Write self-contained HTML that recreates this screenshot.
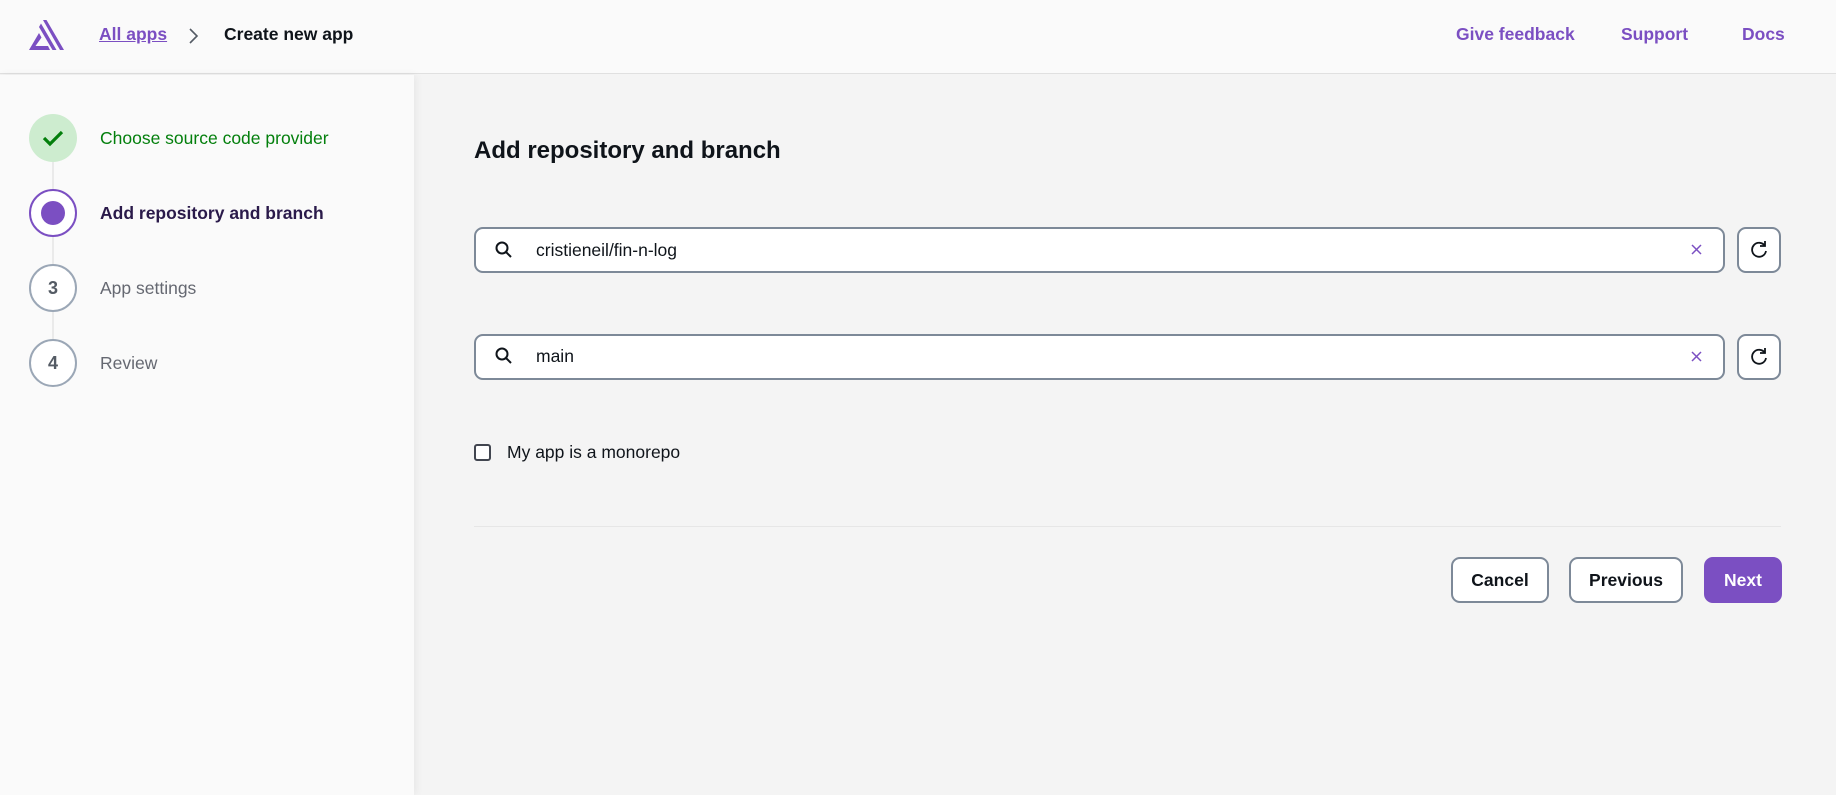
<!DOCTYPE html>
<html><head><meta charset="utf-8"><style>
*{box-sizing:border-box;margin:0;padding:0}
body{width:1836px;height:795px;overflow:hidden;font-family:"Liberation Sans",sans-serif;background:#f4f4f4;position:relative;color:#0f141a}
.hdr{position:absolute;left:0;top:0;width:1836px;height:74px;background:#fafafa;border-bottom:1px solid #e0e0e0}
.abs{position:absolute;white-space:nowrap}
.side{position:absolute;left:0;top:75px;width:414px;height:720px;background:#fafafa;box-shadow:2px 0 8px rgba(0,0,0,0.06)}
.circ{position:absolute;left:29px;width:48px;height:48px;border-radius:50%;display:flex;align-items:center;justify-content:center;font-weight:bold;font-size:18px;color:#545b64}
.lbl{position:absolute;left:100px;font-size:17.5px;line-height:20px}
.inp{position:absolute;left:474px;width:1251px;height:46px;border:2px solid #7d8998;border-radius:9px;background:#fff}
.rb{position:absolute;left:1737px;width:44px;height:46px;border:2px solid #7d8998;border-radius:9px;background:#fff;display:flex;align-items:center;justify-content:center}
.btn{position:absolute;top:557px;height:46px;border:2px solid #7d8998;border-radius:9px;background:#fff;font-weight:bold;font-size:17.5px;display:flex;align-items:center;justify-content:center}
.purple{color:#7b4fc2}
</style></head><body>
<div class="hdr">
<svg class="abs" style="left:29px;top:19px" width="36" height="33" viewBox="0 0 36 33"><path d="M0 31 L10 14 L12.5 18.5 L6.5 27 L19 27 L21 31Z" fill="#7b4fc2"/><path d="M14 1 L17.5 1 L35 31 L31 31Z" fill="#7b4fc2"/><path d="M10 8 L12 4.5 L27.5 31 L23.5 31Z" fill="#7b4fc2"/></svg>
<div class="abs purple" style="left:99px;top:24px;font-size:17.5px;font-weight:bold;text-decoration:underline">All apps</div>
<svg class="abs" style="left:188px;top:27px" width="12" height="18" viewBox="0 0 12 18"><path d="M2 2 L9 9 L2 16" stroke="#545b64" stroke-width="1.6" fill="none"/></svg>
<div class="abs" style="left:224px;top:24px;font-size:17.5px;font-weight:bold">Create new app</div>
<div class="abs purple" style="left:1456px;top:24px;font-size:17.5px;font-weight:bold">Give feedback</div>
<div class="abs purple" style="left:1621px;top:24px;font-size:17.5px;font-weight:bold">Support</div>
<div class="abs purple" style="left:1742px;top:24px;font-size:17.5px;font-weight:bold">Docs</div>
</div>
<div class="side">
<div class="abs" style="left:52px;top:50px;width:2px;height:240px;background:#eaeaea"></div>
<div class="circ" style="top:39px;background:#cdeccf"><svg width="22" height="18" viewBox="0 0 22 18"><path d="M2 9 L8 15 L20 3" stroke="#037f0c" stroke-width="3.2" fill="none"/></svg></div>
<div class="lbl" style="top:53px;color:#037f0c">Choose source code provider</div>
<div class="circ" style="top:114px;border:2px solid #7b4fc2;background:#fff"><div style="width:24px;height:24px;border-radius:50%;background:#7b4fc2"></div></div>
<div class="lbl" style="top:128px;font-weight:bold;color:#2a1a4a">Add repository and branch</div>
<div class="circ" style="top:189px;border:2px solid #9ba7b6;background:#fff">3</div>
<div class="lbl" style="top:203px;color:#656871">App settings</div>
<div class="circ" style="top:264px;border:2px solid #9ba7b6;background:#fff">4</div>
<div class="lbl" style="top:278px;color:#656871">Review</div>
</div>
<div class="abs" style="left:474px;top:137px;font-size:24px;font-weight:bold">Add repository and branch</div>
<div class="inp" style="top:227px"></div>
<div class="inp" style="top:334px"></div>
<svg class="abs" style="left:495px;top:241px" width="18" height="18" viewBox="0 0 18 18"><circle cx="7" cy="7" r="5.5" stroke="#0f141a" stroke-width="2" fill="none"/><path d="M11 11 L16 16" stroke="#0f141a" stroke-width="2"/></svg>
<svg class="abs" style="left:495px;top:347px" width="18" height="18" viewBox="0 0 18 18"><circle cx="7" cy="7" r="5.5" stroke="#0f141a" stroke-width="2" fill="none"/><path d="M11 11 L16 16" stroke="#0f141a" stroke-width="2"/></svg>
<div class="abs" style="left:536px;top:240px;font-size:17.5px">cristieneil/fin-n-log</div>
<div class="abs" style="left:536px;top:346px;font-size:17.5px">main</div>
<svg class="abs" style="left:1691px;top:244px" width="11" height="11" viewBox="0 0 11 11"><path d="M1 1L10 10M10 1L1 10" stroke="#7b4fc2" stroke-width="1.5"/></svg>
<svg class="abs" style="left:1691px;top:351px" width="11" height="11" viewBox="0 0 11 11"><path d="M1 1L10 10M10 1L1 10" stroke="#7b4fc2" stroke-width="1.5"/></svg>
<div class="rb" style="top:227px"><svg width="20" height="20" viewBox="0 0 20 20"><path d="M16 6 A7 7 0 1 0 17 11" stroke="#0f141a" stroke-width="1.8" fill="none"/><path d="M16 1 L16 6 L11 6" stroke="#0f141a" stroke-width="1.8" fill="none"/></svg></div>
<div class="rb" style="top:334px"><svg width="20" height="20" viewBox="0 0 20 20"><path d="M16 6 A7 7 0 1 0 17 11" stroke="#0f141a" stroke-width="1.8" fill="none"/><path d="M16 1 L16 6 L11 6" stroke="#0f141a" stroke-width="1.8" fill="none"/></svg></div>
<div class="abs" style="left:474px;top:444px;width:17px;height:17px;border:2px solid #424650;border-radius:3px;background:#fff"></div>
<div class="abs" style="left:507px;top:442px;font-size:17.5px">My app is a monorepo</div>
<div class="abs" style="left:474px;top:526px;width:1307px;height:1px;background:#e6e6e6"></div>
<div class="btn" style="left:1451px;width:98px">Cancel</div>
<div class="btn" style="left:1569px;width:114px">Previous</div>
<div class="btn" style="left:1704px;width:78px;background:#7b4fc2;border-color:#7b4fc2;color:#fff">Next</div>
</body></html>
